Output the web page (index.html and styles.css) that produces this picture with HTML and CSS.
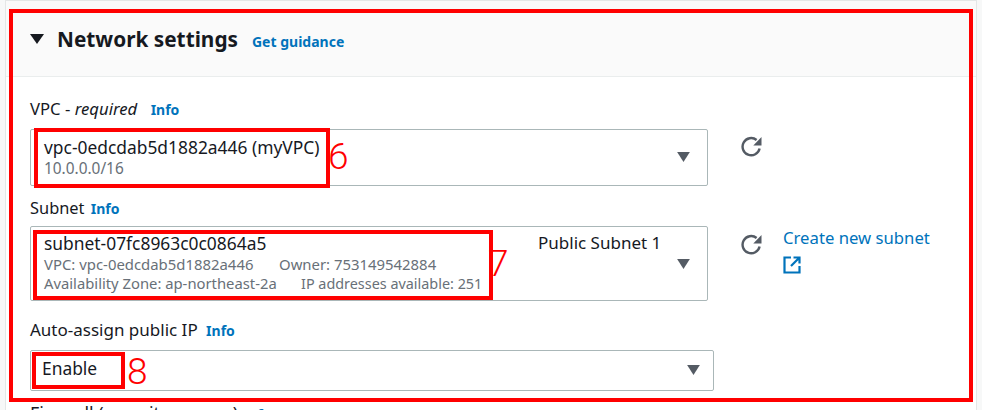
FILE: index.html
```html
<!DOCTYPE html>
<html lang="en">
<head>
    <meta charset="UTF-8" />
    <title>Network settings</title>
    <link rel="stylesheet" href="styles.css">
</head>
<body>
    <section class="card">
        <header class="card-header">
            <svg class="caret-big" viewBox="0 0 14 10"><path d="M0 0h14L7 10z"/></svg>
            <h2>Network settings</h2>
            <a class="info guidance" href="#">Get guidance</a>
        </header>
        <div class="card-body">
            <div class="field field-vpc">
                <label>VPC - <em>required</em> <a class="info" href="#">Info</a></label>
                <div class="row">
                    <div class="select select-vpc">
                        <div class="option">
                            <div class="main">vpc-0edcdab5d1882a446 (myVPC)</div>
                            <div class="sub">10.0.0.0/16</div>
                        </div>
                        <svg class="caret" viewBox="0 0 14 11"><path d="M0 0h14L7 11z"/></svg>
                    </div>
                    <svg class="refresh" viewBox="0 0 22 22"><path d="M18.6 12.5A8.6 8.6 0 1 1 15.6 4" /><path class="fill" d="M20.5 1v8.4h-8.2z"/></svg>
                </div>
            </div>

            <div class="field field-subnet">
                <label>Subnet <a class="info" href="#">Info</a></label>
                <div class="row">
                    <div class="select select-subnet">
                        <div class="option">
                            <div class="main">subnet-07fc8963c0c0864a5</div>
                            <div class="sub"><span class="col-a">VPC: vpc-0edcdab5d1882a446</span>Owner: 753149542884</div>
                            <div class="sub"><span class="col-b">Availability Zone: ap-northeast-2a</span><span class="ip-count">IP addresses available: 251</span></div>
                        </div>
                        <div class="tag">Public Subnet 1</div>
                        <svg class="caret" viewBox="0 0 14 11"><path d="M0 0h14L7 11z"/></svg>
                    </div>
                    <svg class="refresh" viewBox="0 0 22 22"><path d="M18.6 12.5A8.6 8.6 0 1 1 15.6 4" /><path class="fill" d="M20.5 1v8.4h-8.2z"/></svg>
                    <a class="create" href="#">Create new subnet
                        <svg class="external" viewBox="0 0 18 18"><path d="M8 1.5H1.5v15h15V10M10.5 1.5h6v6M16 2l-8 8"/></svg>
                    </a>
                </div>
            </div>

            <div class="field field-ip">
                <label>Auto-assign public IP <a class="info" href="#">Info</a></label>
                <div class="select select-ip">
                    <div class="main">Enable</div>
                    <svg class="caret" viewBox="0 0 14 11"><path d="M0 0h14L7 11z"/></svg>
                </div>
            </div>

            <div class="field field-firewall">
                <label>Firewall (security groups) <a class="info" href="#">Info</a></label>
            </div>
        </div>
    </section>

    <!-- red annotations drawn over the screenshot -->
    <div class="mark mark-outer"></div>
    <div class="mark mark-6"></div>
    <div class="mark mark-7"></div>
    <div class="mark mark-8"></div>
    <span class="num num-6">6</span>
    <span class="num num-7">7</span>
    <span class="num num-8">8</span>
</body>
</html>
```

FILE: styles.css
```css
html, body {
    height: 410px;
    overflow: hidden;
}
body {
    margin: 0;
    position: relative;
    background: #f7f8f8;
    font-family: "Noto Sans", "Open Sans", sans-serif;
    font-size: 17px;
    color: #16191f;
}
.card {
    margin: 0 5px 0 5px;
    height: 460px;
    background: #ffffff;
    border: 1px solid #e4e7e7;
}
.card-header {
    height: 76px;
    box-sizing: border-box;
    display: flex;
    align-items: center;
    padding: 0 0 0 24px;
    background: #fafafa;
    border-bottom: 1px solid #eaeded;
}
.caret-big {
    width: 14px;
    height: 10px;
    fill: #16191f;
    margin-right: 13px;
}
h2 {
    margin: 0;
    font-size: 20.8px;
    font-weight: 700;
}
.info {
    color: #0073bb;
    font-size: 14px;
    font-weight: 700;
    font-style: normal;
    text-decoration: none;
    margin-left: 4px;
}
.guidance {
    margin-left: 14px;
    margin-top: 5px;
}
.card-body {
    padding: 21px 0 0 24px;
}
label {
    display: block;
    line-height: 22px;
}
.field-vpc label {
    font-size: 16.7px;
}
.field-vpc .info {
    margin-left: 9px;
}
.field-subnet label {
    font-size: 16.4px;
}
.field-subnet .info {
    margin-left: 2px;
}
.field-firewall label {
    font-size: 17.8px;
}
.field-firewall .info {
    margin-left: 0;
}
.row {
    display: flex;
    align-items: flex-start;
}
.select {
    box-sizing: border-box;
    width: 678px;
    position: relative;
    background: #ffffff;
    border: 1px solid #aab7b8;
    border-radius: 2px;
    display: flex;
}
.select-vpc {
    height: 57px;
    margin-top: 8px;
    padding: 5px 13px;
}
.select-vpc .sub {
    font-size: 15.4px;
}
.select-subnet {
    height: 75px;
    margin-top: 6px;
    padding: 4px 13px;
}
.select-ip {
    width: 684px;
    height: 41px;
    margin-top: 8px;
    padding: 5px 11px;
}
.main {
    font-size: 17.4px;
    line-height: 24px;
}
.sub {
    font-size: 14.9px;
    line-height: 19px;
    color: #687078;
}
.col-a {
    display: inline-block;
    width: 235px;
}
.col-b {
    display: inline-block;
    width: 257px;
    font-size: 14.8px;
}
.ip-count {
    font-size: 14.4px;
}
.tag {
    position: absolute;
    left: 507px;
    top: 4px;
    line-height: 24px;
}
.caret {
    position: absolute;
    right: 17px;
    top: 22px;
    width: 13px;
    height: 10px;
    fill: #545b64;
}
.select-subnet .caret {
    top: 32px;
}
.select-ip .caret {
    right: 13px;
    top: 14px;
}
.refresh {
    width: 22px;
    height: 22px;
    margin: 15px 0 0 33px;
    fill: none;
    stroke: #545b64;
    stroke-width: 2.4;
}
.select-subnet + .refresh {
    margin-top: 14px;
}
.refresh .fill {
    fill: #545b64;
    stroke: none;
}
.create {
    margin: 5px 0 0 20px;
    width: 160px;
    font-size: 16.7px;
    color: #0073bb;
    text-decoration: none;
    line-height: 25px;
}
.external {
    display: block;
    width: 18px;
    height: 18px;
    margin-top: 6px;
    fill: none;
    stroke: #0073bb;
    stroke-width: 2.2;
}
.field-subnet {
    margin-top: 11px;
}
.field-ip {
    margin-top: 18px;
}
.field-firewall {
    margin-top: 11px;
}
.mark {
    position: absolute;
    box-sizing: border-box;
    border: 4px solid #ff0000;
}
.mark-outer {
    left: 9px;
    top: 9px;
    width: 964px;
    height: 393px;
}
.mark-6 {
    left: 34px;
    top: 128px;
    width: 296px;
    height: 60px;
}
.mark-7 {
    left: 33px;
    top: 230px;
    width: 460px;
    height: 70px;
}
.mark-8 {
    left: 32px;
    top: 352px;
    width: 93px;
    height: 37px;
}
.num {
    position: absolute;
    color: #ff0000;
    font-family: "Roboto", sans-serif;
    font-weight: 300;
    font-size: 37px;
    line-height: 38px;
}
.num-6 { left: 328px; top: 138px; }
.num-7 { left: 488px; top: 245px; }
.num-8 { left: 127px; top: 353px; }
```
